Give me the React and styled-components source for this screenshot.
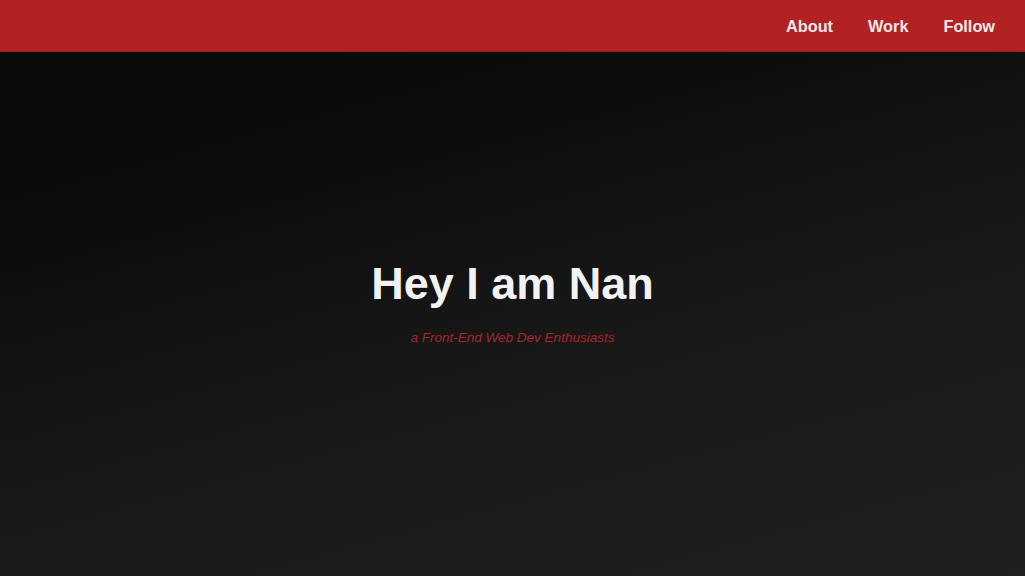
import * as React from "react";
import styled, { createGlobalStyle } from "styled-components";

const GlobalStyle = createGlobalStyle`
  html, body {
    margin: 0;
    padding: 0;
    height: 100%;
  }
  body {
    font-family: "Liberation Sans", Arial, sans-serif;
    background: #0b0b0b;
  }
  #root {
    min-height: 100vh;
    display: flex;
    flex-direction: column;
  }
`;

const Page = styled.div`
  flex: 1;
  display: flex;
  flex-direction: column;
  min-height: 100vh;
  background: linear-gradient(165deg, #090909 0%, #0c0c0c 28%, #181818 58%, #202020 100%);
`;

const Header = styled.header`
  height: 49px;
  background: #b22222;
  border-bottom: 1px solid #9c1d1d;
  display: flex;
  justify-content: flex-end;
  align-items: center;
  padding: 2px 30px 0 0;
`;

const Nav = styled.nav`
  display: flex;
  gap: 35px;
  a {
    color: #f1e9e9;
    text-decoration: none;
    font-weight: bold;
    font-size: 16.3px;
  }
`;

const Hero = styled.section`
  flex: 1;
  display: flex;
  flex-direction: column;
  align-items: center;
  justify-content: center;
  padding-bottom: 26px;
  .title {
    margin: 0;
    color: #f2f2f2;
    font-size: 45px;
    font-weight: bold;
    line-height: 52px;
  }
  .sub {
    margin: 20px 0 0;
    color: #a82626;
    font-size: 13.5px;
    font-style: italic;
  }
`;

const App = () => {
  return (
    <Page>
      <GlobalStyle />
      <Header>
        <Nav>
          <a href="#about">About</a>
          <a href="#work">Work</a>
          <a href="#follow">Follow</a>
        </Nav>
      </Header>
      <Hero>
        <h1 className="title">Hey I am Nan</h1>
        <p className="sub">a Front-End Web Dev Enthusiasts</p>
      </Hero>
    </Page>
  );
};

export default App;
